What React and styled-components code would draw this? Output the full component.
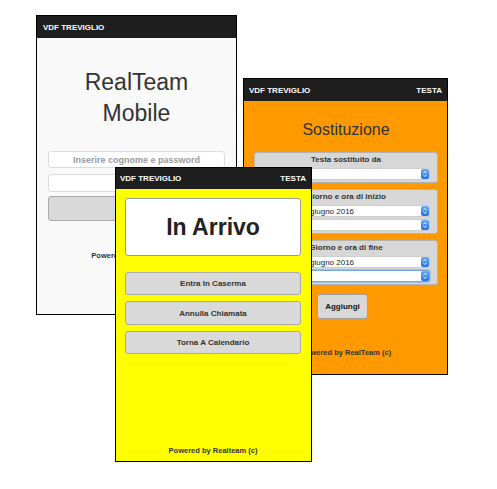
import styled, { createGlobalStyle } from "styled-components";

const GlobalStyle = createGlobalStyle`
  html, body {
    margin: 0;
    padding: 0;
    background: #fff;
  }
  body {
    font-family: "Liberation Sans", Arial, sans-serif;
  }
`;

const Desktop = styled.div`
  position: relative;
  width: 497px;
  height: 489px;
  background: #fff;
  overflow: hidden;
`;

const Window = styled.div`
  position: absolute;
  left: ${(p) => p.$x}px;
  top: ${(p) => p.$y}px;
  width: ${(p) => p.$w}px;
  height: ${(p) => p.$h}px;
  z-index: ${(p) => p.$z};
  box-sizing: border-box;
  border: 1px solid #000;
  background: ${(p) => p.$bg};
  display: flex;
  flex-direction: column;
  overflow: hidden;
`;

const Header = styled.div`
  flex: none;
  height: ${(p) => p.$h || 22}px;
  background: #1e1e1e;
  color: #fff;
  display: flex;
  align-items: center;
  justify-content: space-between;
  padding: 0 5px 0 ${(p) => p.$pl || 5}px;
  font-size: 8px;
  font-weight: bold;
`;

const Body = styled.div`
  flex: 1;
  display: flex;
  flex-direction: column;
  padding: ${(p) => p.$pad};
  color: #333;
`;

const BigTitle = styled.h1`
  margin: 0 0 22px;
  font-size: 23px;
  line-height: 31px;
  font-weight: normal;
  text-align: center;
  color: #333;
`;

const TextField = styled.div`
  box-sizing: border-box;
  height: ${(p) => p.$h}px;
  margin-bottom: ${(p) => p.$mb}px;
  background: #fff;
  border: 1px solid #dcdcdc;
  border-radius: 3px;
  display: flex;
  align-items: center;
  justify-content: center;
  font-size: 9px;
  font-weight: bold;
  color: #9a9a9a;
`;

const GreyButton = styled.div`
  box-sizing: border-box;
  height: ${(p) => p.$h}px;
  margin-bottom: ${(p) => p.$mb || 0}px;
  background: #d9d9d9;
  border: 1px solid #a9a9a9;
  border-radius: 3px;
  display: flex;
  align-items: center;
  justify-content: center;
  font-size: 8px;
  font-weight: bold;
  color: #333;
`;

const Footer = styled.div`
  margin-top: ${(p) => p.$mt || "auto"};
  font-size: 7.5px;
  line-height: 10px;
  font-weight: bold;
  text-align: center;
  color: #333;
`;

const SectionTitle = styled.h2`
  margin: 0 0 12px;
  font-size: 16px;
  line-height: 20px;
  font-weight: normal;
  text-align: center;
  color: #333;
`;

const FieldGroup = styled.div`
  box-sizing: border-box;
  margin-bottom: 6px;
  background: #d7d7d7;
  border: 1px solid #b3b3b3;
  border-radius: 3px;
  padding: 2px 8px 3px 8px;
  display: flex;
  flex-direction: column;
  gap: 4px;
`;

const GroupLabel = styled.div`
  font-size: 8px;
  line-height: 10px;
  font-weight: bold;
  text-align: center;
  color: #333;
`;

const Select = styled.div`
  box-sizing: border-box;
  height: 10px;
  background: #fff;
  border-radius: 2px;
  display: flex;
  align-items: center;
  justify-content: space-between;
  padding-left: 3px;
  font-size: 8px;
  color: #222;
  box-shadow: ${(p) =>
    p.$focus ? "0 0 0 1.5px rgba(90, 150, 235, 0.75)" : "0 0 0 0.5px #c6c6c6"};
`;

const SmallButton = styled.div`
  box-sizing: border-box;
  align-self: flex-start;
  margin: 3px 0 0 63px;
  width: 51px;
  height: 25px;
  background: #d8d8d8;
  border: 1px solid #a0a0a0;
  border-radius: 3px;
  display: flex;
  align-items: center;
  justify-content: center;
  font-size: 8px;
  font-weight: bold;
  color: #111;
`;

const StatusBox = styled.div`
  box-sizing: border-box;
  height: 58px;
  margin-bottom: 16px;
  background: #fff;
  border: 1px solid #9a9a9a;
  border-radius: 3px;
  display: flex;
  align-items: center;
  justify-content: center;
  font-size: 23px;
  font-weight: bold;
  color: #222;
`;

const SelectArrow = () => (
  <svg width="8" height="10" viewBox="0 0 8 10">
    <defs>
      <linearGradient id="sa" x1="0" y1="0" x2="0" y2="1">
        <stop offset="0" stopColor="#6aaaf8" />
        <stop offset="1" stopColor="#1f72e6" />
      </linearGradient>
    </defs>
    <rect x="0" y="0" width="8" height="10" rx="2" fill="url(#sa)" />
    <path d="M2.4 4 L4 2.6 L5.6 4 M2.4 6 L4 7.4 L5.6 6" stroke="#fff" strokeWidth="0.9" fill="none" />
  </svg>
);

const Dropdown = ({ value, focus }) => (
  <Select $focus={focus}>
    <span>{value}</span>
    <SelectArrow />
  </Select>
);

export default function App() {
  return (
    <>
      <GlobalStyle />
      <Desktop>
        <Window $x={36} $y={15} $w={201} $h={300} $z={1} $bg="#f9f9f9">
          <Header $pl={6}>
            <span>VDF TREVIGLIO</span>
          </Header>
          <Body $pad="29px 11px 0">
            <BigTitle>
              RealTeam
              <br />
              Mobile
            </BigTitle>
            <TextField $h={17} $mb={6}>Inserire cognome e password</TextField>
            <TextField $h={18} $mb={4} />
            <GreyButton $h={25}>Entra</GreyButton>
            <Footer $mt="30px">Powered by RealTeam (c)</Footer>
          </Body>
        </Window>

        <Window $x={243} $y={78} $w={205} $h={297} $z={2} $bg="#ff9900">
          <Header>
            <span>VDF TREVIGLIO</span>
            <span>TESTA</span>
          </Header>
          <Body $pad="19px 9px 0 10px">
            <SectionTitle>Sostituzione</SectionTitle>
            <FieldGroup>
              <GroupLabel>Testa sostituito da</GroupLabel>
              <Dropdown value="" />
            </FieldGroup>
            <FieldGroup>
              <GroupLabel>Giorno e ora di inizio</GroupLabel>
              <Dropdown value="mercoledì 1 giugno 2016" />
              <Dropdown value="" />
            </FieldGroup>
            <FieldGroup>
              <GroupLabel>Giorno e ora di fine</GroupLabel>
              <Dropdown value="mercoledì 1 giugno 2016" />
              <Dropdown value="" focus />
            </FieldGroup>
            <SmallButton>Aggiungi</SmallButton>
            <Footer $mt="29px">Powered by RealTeam (c)</Footer>
          </Body>
        </Window>

        <Window $x={115} $y={167} $w={197} $h={295} $z={3} $bg="#ffff00">
          <Header $h={21} $pl={4}>
            <span>VDF TREVIGLIO</span>
            <span>TESTA</span>
          </Header>
          <Body $pad="9px 10px 5px 9px">
            <StatusBox>In Arrivo</StatusBox>
            <GreyButton $h={23} $mb={6}>Entra In Caserma</GreyButton>
            <GreyButton $h={24} $mb={6}>Annulla Chiamata</GreyButton>
            <GreyButton $h={23}>Torna A Calendario</GreyButton>
            <Footer>Powered by Realteam (c)</Footer>
          </Body>
        </Window>
      </Desktop>
    </>
  );
}
